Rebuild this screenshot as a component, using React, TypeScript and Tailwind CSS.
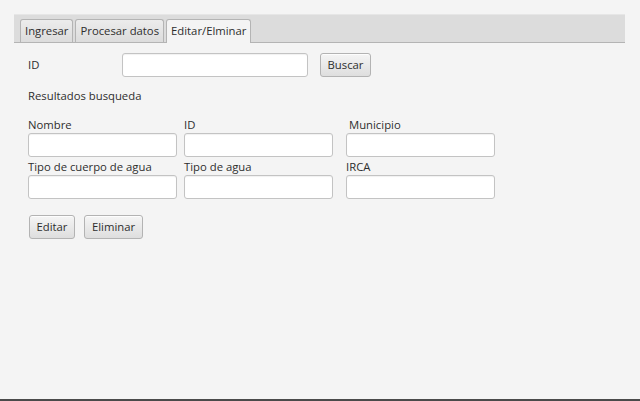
import React from 'react';

const font = { fontFamily: '"Open Sans", "Noto Sans", sans-serif' };

const Field = ({ className = '' }: { className?: string }) => (
  <input
    type="text"
    className={`h-[24px] w-[149px] rounded-[3px] border border-[#c3c3c3] bg-white shadow-[inset_0_1px_1px_rgba(0,0,0,0.06)] outline-none ${className}`}
  />
);

const Btn = ({ label, className = '' }: { label: string; className?: string }) => (
  <button className={`h-[24px] rounded-[3px] border border-[#b3b3b3] bg-gradient-to-b from-[#f5f5f5] to-[#dedede] text-[11.3px] leading-none text-[#2e2e2e] shadow-[inset_0_1px_0_rgba(255,255,255,0.8)] ${className}`}>
    {label}
  </button>
);

const Labeled = ({ label, className = '', labelClass = '' }: { label: string; className?: string; labelClass?: string }) => (
  <div className={`flex flex-col ${className}`}>
    <span className={`h-[17px] text-[11.3px] leading-[17px] text-[#2e2e2e] ${labelClass}`}>{label}</span>
    <Field />
  </div>
);

export default function App() {
  const tabs = ['Ingresar', 'Procesar datos', 'Editar/Elminar'];
  return (
    <div style={font} className="flex h-[401px] w-[640px] flex-col overflow-hidden border-b-2 border-[#4a4a4a] bg-[#f4f4f4]">
      {/* tab header */}
      <div className="ml-[14px] mt-[14px] flex h-[29px] w-[611px] items-end gap-[2px] border-b border-[#b4b4b4] bg-[#dcdcdc] pl-[6px] shadow-[inset_0_1px_0_#e6e6e6]">
        {tabs.map((t, i) => {
          const active = i === 2;
          return (
            <div
              key={t}
              className={`flex h-[23px] items-center rounded-t-[3px] border border-b-0 border-[#b4b4b4] px-[4px] text-[11.3px] text-[#2e2e2e] ${
                active ? 'relative -mb-px h-[24px] bg-[#f4f4f4]' : 'bg-gradient-to-b from-[#ececec] to-[#dcdcdc]'
              }`}
            >
              {t}
            </div>
          );
        })}
      </div>

      {/* body */}
      <div className="flex flex-col pl-[28px] pt-[10px]">
        <div className="flex items-center">
          <span className="w-[94px] text-[11.3px] text-[#2e2e2e]">ID</span>
          <input
            type="text"
            className="h-[24px] w-[186px] rounded-[3px] border border-[#c3c3c3] bg-white shadow-[inset_0_1px_1px_rgba(0,0,0,0.06)] outline-none"
          />
          <Btn label="Buscar" className="ml-[12px] w-[51px]" />
        </div>

        <div className="mt-[10px] h-[17px] text-[11.3px] leading-[17px] text-[#2e2e2e]">Resultados busqueda</div>

        <div className="mt-[12px] flex">
          <Labeled label="Nombre" />
          <Labeled label="ID" className="ml-[7px]" />
          <Labeled label="Municipio" className="ml-[13px]" labelClass="pl-[3px]" />
        </div>
        <div className="mt-px flex">
          <Labeled label="Tipo de cuerpo de agua" />
          <Labeled label="Tipo de agua" className="ml-[7px]" />
          <Labeled label="IRCA" className="ml-[13px]" />
        </div>

        <div className="ml-px mt-[16px] flex gap-[9px]">
          <Btn label="Editar" className="w-[46px]" />
          <Btn label="Eliminar" className="w-[59px]" />
        </div>
      </div>
    </div>
  );
}
